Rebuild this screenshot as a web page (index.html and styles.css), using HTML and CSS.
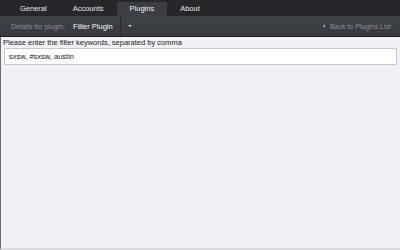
FILE: index.html
```html
<!DOCTYPE html>
<html>
<head>
  <title>Plugins</title>
  <link rel="stylesheet" href="styles.css">
</head>
<body>
  <div class="window">
    <nav class="tabs">
      <div class="tab">General</div>
      <div class="tab">Accounts</div>
      <div class="tab active">Plugins</div>
      <div class="tab">About</div>
    </nav>

    <div class="toolbar">
      <span class="label">Details for plugin:</span>
      <span class="plugin-name">Filter Plugin</span>
      <span class="sep"></span>
      <span class="dropdown"></span>
      <span class="back"><span class="back-arrow"></span>Back to Plugins List</span>
    </div>

    <main class="content">
      <div class="prompt">Please enter the filter keywords, separated by comma</div>
      <input class="keywords" type="text" value="sxsw, #sxsw, austin">
    </main>
  </div>
</body>
</html>
```

FILE: styles.css
```css
/* base */
body {
  margin: 0;
  font-family: "Liberation Sans", Arial, sans-serif;
  font-size: 7.5px;
  background: #f0f1f5;
}

.window {
  display: flex;
  flex-direction: column;
  height: 250px;
}

/* top tabs */
.tabs {
  display: flex;
  height: 16px;
  padding-left: 7px;
  background: #25272b;
  align-items: flex-end;
}

.tab {
  padding: 0 13px;
  height: 14px;
  line-height: 14px;
  color: #e4e6ea;
}

.tab.active {
  background: #3b3e43;
  color: #f2f3f5;
}

/* toolbar under tabs */
.toolbar {
  display: flex;
  align-items: center;
  height: 20px;
  padding-left: 11px;
  background: linear-gradient(#3e4146, #373a3f);
  border-bottom: 1px solid #1c1d20;
  font-size: 7px;
}

.label {
  color: #8c9097;
}

.plugin-name {
  margin-left: 8px;
  color: #f4f5f7;
  font-size: 7.5px;
}

.sep {
  width: 1px;
  height: 20px;
  margin-left: 7px;
  background: #2a2c30;
}

.dropdown {
  margin-left: 7px;
  width: 0;
  height: 0;
  border-left: 2px solid transparent;
  border-right: 2px solid transparent;
  border-top: 2px solid #d8dade;
}

.back {
  margin-left: auto;
  margin-right: 9px;
  display: flex;
  align-items: center;
  color: #8c9097;
}

.back-arrow {
  width: 0;
  height: 0;
  border-top: 2px solid transparent;
  border-bottom: 2px solid transparent;
  border-right: 2px solid #a4a7ad;
  margin-right: 5px;
}

/* body area */
.content {
  flex: 1;
  padding: 1px 3px 0 3px;
  border-left: 1px solid #6a6c70;
  border-bottom: 2px solid #d9dade;
  background: #f0f1f5;
}

.prompt {
  color: #1a1a1a;
  margin-left: -1px;
  height: 10px;
  line-height: 10px;
}

.keywords {
  display: block;
  box-sizing: border-box;
  width: 100%;
  height: 17px;
  margin: 0;
  padding: 0 4px;
  border: 1px solid #c4c8cf;
  border-radius: 1px;
  background: #fff;
  font-family: "Liberation Sans", Arial, sans-serif;
  font-size: 7.5px;
  color: #1a1a1a;
  outline: none;
}
```
